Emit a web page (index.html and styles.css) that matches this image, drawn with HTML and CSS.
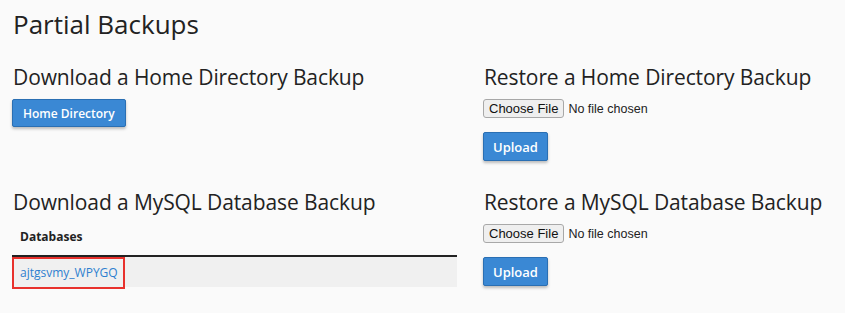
FILE: index.html
```html
<!DOCTYPE html>
<html lang="en">
<head>
  <meta charset="UTF-8">
  <title>Partial Backups</title>
  <link rel="stylesheet" href="styles.css">
</head>
<body>
  <h1>Partial Backups</h1>

  <div class="backups">
    <!-- home directory -->
    <section class="section">
      <h2>Download a Home Directory Backup</h2>
      <button class="btn">Home Directory</button>
    </section>
    <section class="section">
      <h2>Restore a Home Directory Backup</h2>
      <form class="restore">
        <input type="file" name="homedir">
        <button type="button" class="btn btn-upload">Upload</button>
      </form>
    </section>

    <!-- mysql -->
    <section class="section">
      <h2>Download a MySQL Database Backup</h2>
      <div class="db-list">
        <div class="db-head">Databases</div>
        <div class="db-row">
          <a href="#" class="db-link">ajtgsvmy_WPYGQ</a>
        </div>
      </div>
    </section>
    <section class="section">
      <h2>Restore a MySQL Database Backup</h2>
      <form class="restore">
        <input type="file" name="sqlbackup">
        <button type="button" class="btn btn-upload">Upload</button>
      </form>
    </section>
  </div>
</body>
</html>
```

FILE: styles.css
```css
:root {
  --bg: #fafafa;
  --text: #222;
  --blue: #3a88d4;
  --blue-dark: #2a6fb3;
  --row: #f0f0f0;
}
*, *::before, *::after { box-sizing: border-box; margin: 0; padding: 0; }
html, body { min-height: 100%; }
body {
  background: var(--bg);
  color: var(--text);
  font-family: 'Open Sans', sans-serif;
  padding: 0 12px 20px;
}
h1 {
  font-size: 26px;
  font-weight: 400;
  line-height: 31px;
  margin-top: 9px;
  padding-left: 1px;
}
h2 {
  font-size: 21px;
  font-weight: 400;
  line-height: 25px;
  margin-bottom: 9px;
  padding-left: 1px;
  white-space: nowrap;
  letter-spacing: -0.1px;
}
.backups {
  display: grid;
  grid-template-columns: 445px 1fr;
  column-gap: 26px;
  row-gap: 29px;
  margin-top: 25px;
}
.btn {
  display: inline-block;
  background: var(--blue);
  color: #fff;
  border: 1px solid var(--blue-dark);
  border-radius: 2px;
  font-family: 'Open Sans', sans-serif;
  font-size: 12px;
  font-weight: 600;
  height: 28px;
  padding: 0 10px;
  box-shadow: 0 2px 3px rgba(0,0,0,0.25);
  cursor: pointer;
}
.restore {
  display: flex;
  flex-direction: column;
  align-items: flex-start;
  gap: 14px;
}
.restore input[type="file"] {
  font-family: 'Liberation Sans', sans-serif;
  font-size: 12.5px;
  color: #222;
  height: 19px;
}
.restore input[type="file"]::file-selector-button {
  font-family: 'Liberation Sans', sans-serif;
  font-size: 13px;
  height: 19px;
  padding: 0 5px;
  margin-right: 4px;
  background: #efefef;
  border: 1px solid #a8a8a8;
  border-radius: 3px;
  color: #111;
}
.btn-upload {
  height: 29px;
  font-size: 13px;
  padding: 0 9px;
}

/* databases list */
.db-head {
  font-size: 12px;
  font-weight: 700;
  line-height: 18px;
  padding: 4px 8px 9px;
  border-bottom: 2px solid var(--text);
}
.db-row {
  display: flex;
  align-items: flex-start;
  background: linear-gradient(var(--row), var(--row)) top / 100% 30px no-repeat;
}
/* red highlight box round the link */
.db-link {
  display: block;
  color: #2e7fcf;
  text-decoration: none;
  font-size: 12px;
  line-height: 18px;
  padding: 5px 5px 5px 6px;
  border: 2px solid #e8312c;
}
```
